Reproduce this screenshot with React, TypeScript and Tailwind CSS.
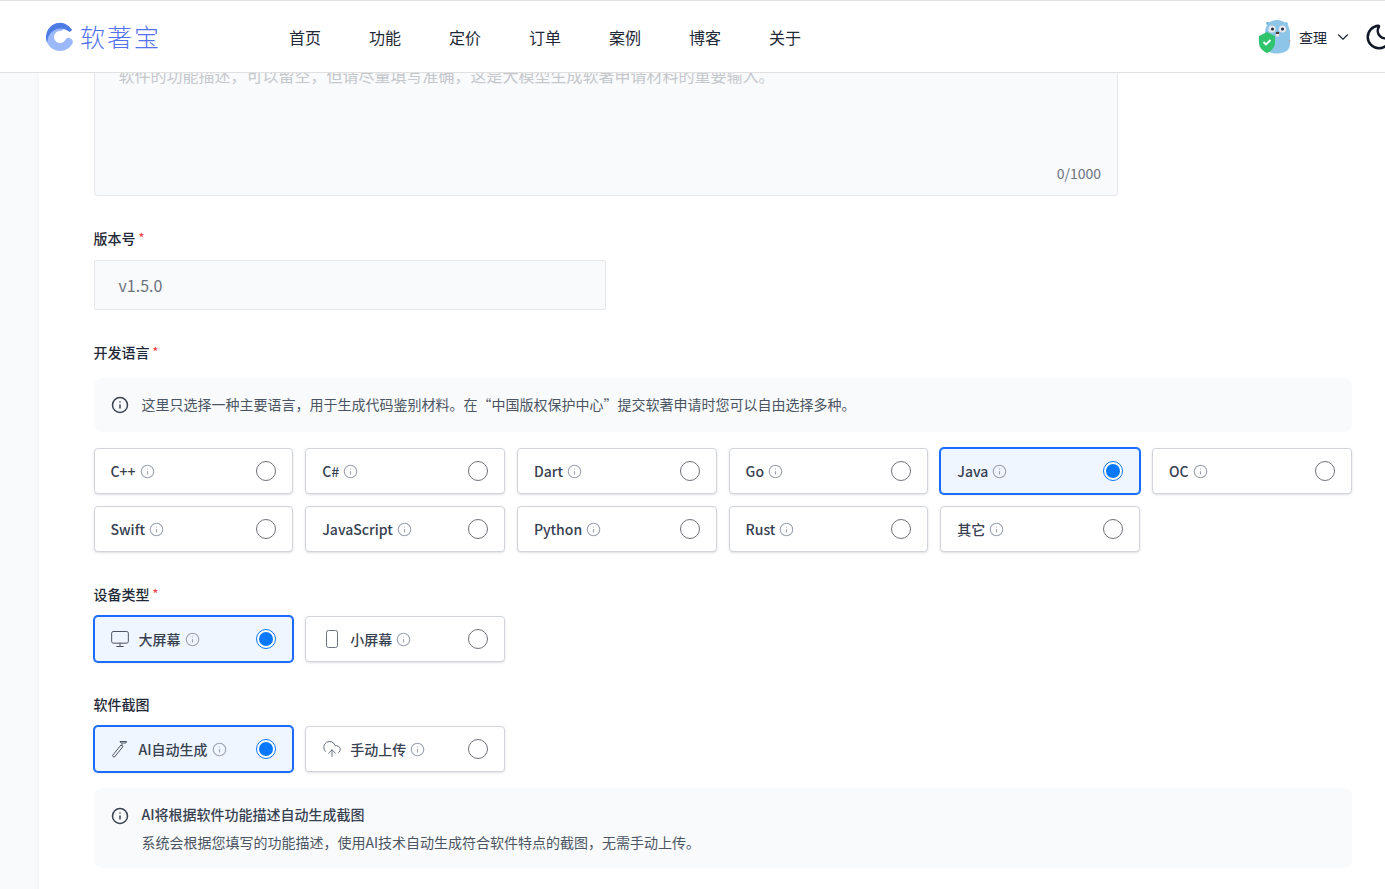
import { ChevronDown, CloudUpload, Info, Monitor, Moon } from 'lucide-react'
import type { ReactNode } from 'react'

const navItems = ['首页', '功能', '定价', '订单', '案例', '博客', '关于']

const languages = ['C++', 'C#', 'Dart', 'Go', 'Java', 'OC', 'Swift', 'JavaScript', 'Python', 'Rust', '其它']

function LogoMark() {
  return (
    <svg width="30" height="30" viewBox="0 0 30 30">
      <path d="M15 5A10 10 0 1 0 23.700 20" fill="none" stroke="#9bb8fb" strokeWidth="8" strokeLinecap="round" />
      <path d="M27.200 8A14 14 0 0 0 1 15c0 2 .4 4 1.200 5.500C2.500 12 9 6.500 15 6.500c4.500 0 7.500 2 9.500 3.500z" fill="#4c7be4" />
    </svg>
  )
}

function Mascot() {
  return (
    <svg width="33" height="34" viewBox="0 0 33 34" className="shrink-0">
      <circle cx="10" cy="3.500" r="1.800" fill="#6fb3de" />
      <circle cx="28" cy="4" r="1.800" fill="#6fb3de" />
      <path d="M7 13C7 5 12 0 19 0s13 5 13 13v11c0 6-5 9.500-13 9.500S7 30 7 24z" fill="#8cc5e8" />
      <circle cx="14" cy="9" r="3.600" fill="#e5e7eb" />
      <circle cx="24.500" cy="9" r="3.600" fill="#e5e7eb" />
      <circle cx="14.500" cy="9" r="1.500" fill="#1f2937" />
      <circle cx="24.500" cy="9" r="1.500" fill="#1f2937" />
      <ellipse cx="19.500" cy="13" rx="1.800" ry="1.200" fill="#4b3b36" />
      <rect x="18" y="14" width="3" height="2.500" fill="#f3e3dc" />
      <circle cx="31.500" cy="21" r="1" fill="#b9a79f" />
      <path d="M1 16 9 12l8 4v6.500C17 27.500 13.500 31 9 33 4.500 31 1 27.500 1 22.500z" fill="#2fc46b" />
      <path d="m5.500 22 2.500 2.500 4.500-4.500" fill="none" stroke="#fff" strokeWidth="1.800" />
    </svg>
  )
}

function Wand() {
  return (
    <svg width="18" height="18" viewBox="0 0 18 18" fill="none" stroke="#4b5563" strokeWidth="1">
      <path d="M2.500 17 1.500 15.500 10 5l2 1.500L3.500 17z" />
      <path d="M9 1.500h6.500L15 3h-5z" />
      <path d="M11 3.500v2" />
    </svg>
  )
}

function Phone() {
  return (
    <svg width="18" height="18" viewBox="0 0 18 18" fill="none" stroke="#6b7280" strokeWidth="1">
      <rect x="3.500" y="0.500" width="11" height="17" rx="2" />
    </svg>
  )
}

function Radio({ checked }: { checked: boolean }) {
  if (checked) {
    return (
      <span className="flex h-5 w-5 items-center justify-center rounded-full border border-[#0a77ff] bg-white">
        <span className="h-[14px] w-[14px] rounded-full bg-[#0a77ff]" />
      </span>
    )
  }
  return <span className="h-5 w-5 rounded-full border border-[#71717a] bg-white" />
}

function OptionCard({ label, checked = false, icon }: { label: string; checked?: boolean; icon?: ReactNode }) {
  return (
    <div
      className={
        checked
          ? 'flex h-[46px] items-center justify-between rounded-[4px] border border-[#1a6bff] bg-[#eff6ff] pl-4 pr-4 shadow-sm ring-1 ring-[#1a6bff]'
          : 'flex h-[46px] items-center justify-between rounded-[4px] border border-[#d1d5db] bg-white pl-4 pr-4 shadow-sm'
      }
    >
      <div className="flex items-center">
        {icon && <span className="mr-[9px] flex w-[19px] justify-center">{icon}</span>}
        <span className="text-sm font-medium text-[#374151]">{label}</span>
        <Info className="ml-[4px] h-[15px] w-[15px] text-[#9ca3af]" strokeWidth={1.8} />
      </div>
      <Radio checked={checked} />
    </div>
  )
}

function FieldLabel({ children, required = false }: { children: ReactNode; required?: boolean }) {
  return (
    <div className="flex h-5 items-center text-sm font-medium leading-5 text-[#1f2937]">
      {children}
      {required && <span className="ml-[3px] text-xs leading-none -mt-[2px] text-[#ef4444]">*</span>}
    </div>
  )
}

export default function App() {
  return (
    <div className="h-[889px] overflow-hidden bg-[#f9fafb] font-['Noto_Sans_CJK_SC','Noto_Sans',sans-serif]">
      {/* Header */}
      <header className="relative z-10 flex h-[73px] items-center border-t border-b border-[#e0e0e0] bg-white pl-[45px]">
        <div className="flex w-[244px] items-center">
          <LogoMark />
          <span className="ml-[5px] text-[25px] font-light leading-none tracking-[2px] text-[#5472ee]">软著宝</span>
        </div>
        <nav className="flex gap-12">
          {navItems.map((item) => (
            <a key={item} className="text-base text-[#1f2937]">
              {item}
            </a>
          ))}
        </nav>
        <div className="ml-auto flex w-[127px] shrink-0 items-center overflow-hidden">
          <Mascot />
          <span className="ml-[8px] shrink-0 whitespace-nowrap text-sm text-[#1f2937]">查理</span>
          <ChevronDown className="ml-[7px] h-[18px] w-[18px] shrink-0 text-[#1f2937]" strokeWidth={1.5} />
          <Moon className="ml-[12px] h-[30px] w-[30px] shrink-0 text-[#111827]" strokeWidth={2} />
        </div>
      </header>

      {/* Form */}
      <main className="ml-[39px] min-h-full bg-white pl-[54.5px] pr-[33.3px] shadow-[0_0_8px_rgba(0,0,0,0.04)]">
        <div className="relative h-[123px] w-[1024.5px] overflow-hidden rounded-b-[4px] border-x border-b border-[#e5e7eb] bg-[#f9fafb] px-6">
          <p className="-mt-[10px] text-base leading-6 text-[#c4c7cc]">
            软件的功能描述，可以留空，但请尽量填写准确，这是大模型生成软著申请材料的重要输入。
          </p>
          <span className="absolute bottom-[12px] right-[16px] text-sm text-[#6b7280]">0/1000</span>
        </div>

        <div className="mt-[32px]">
          <FieldLabel required>版本号</FieldLabel>
          <div className="mt-[12px] flex h-[50px] w-[512px] items-center rounded-[2px] border border-[#e5e7eb] bg-[#f9fafb] px-6 text-base text-[#6b7280]">
            v1.5.0
          </div>
        </div>

        <div className="mt-[32px]">
          <FieldLabel required>开发语言</FieldLabel>
          <div className="mt-[16px] flex h-[54px] items-center rounded-lg bg-[#f9fafb] pl-[17px] text-sm text-[#4b5563]">
            <Info className="mr-[13px] h-[18px] w-[18px] text-[#374151]" strokeWidth={2} />
            <span className="-mt-[2px]">这里只选择一种主要语言，用于生成代码鉴别材料。在“中国版权保护中心”提交软著申请时您可以自由选择多种。</span>
          </div>
          <div className="mt-4 grid grid-cols-6 gap-3">
            {languages.map((lang) => (
              <OptionCard key={lang} label={lang} checked={lang === 'Java'} />
            ))}
          </div>
        </div>

        <div className="mt-[32px]">
          <FieldLabel required>设备类型</FieldLabel>
          <div className="mt-[12px] grid grid-cols-6 gap-3">
            <OptionCard label="大屏幕" checked icon={<Monitor className="h-5 w-5 shrink-0 text-[#4b5563]" strokeWidth={1.2} />} />
            <OptionCard label="小屏幕" icon={<Phone />} />
          </div>
        </div>

        <div className="mt-[32px]">
          <FieldLabel>软件截图</FieldLabel>
          <div className="mt-[12px] grid grid-cols-6 gap-3">
            <OptionCard label="AI自动生成" checked icon={<Wand />} />
            <OptionCard label="手动上传" icon={<CloudUpload className="h-5 w-5 shrink-0 text-[#6b7280]" strokeWidth={1.2} />} />
          </div>
          <div className="mt-4 flex h-20 rounded-lg bg-[#f9fafb] pl-[17px] pt-[16px]">
            <Info className="mr-[13px] mt-[3px] h-[18px] w-[18px] text-[#374151]" strokeWidth={2} />
            <div>
              <p className="text-sm font-medium leading-5 text-[#374151]">AI将根据软件功能描述自动生成截图</p>
              <p className="mt-[8px] text-sm leading-5 text-[#4b5563]">系统会根据您填写的功能描述，使用AI技术自动生成符合软件特点的截图，无需手动上传。</p>
            </div>
          </div>
        </div>
      </main>
    </div>
  )
}
